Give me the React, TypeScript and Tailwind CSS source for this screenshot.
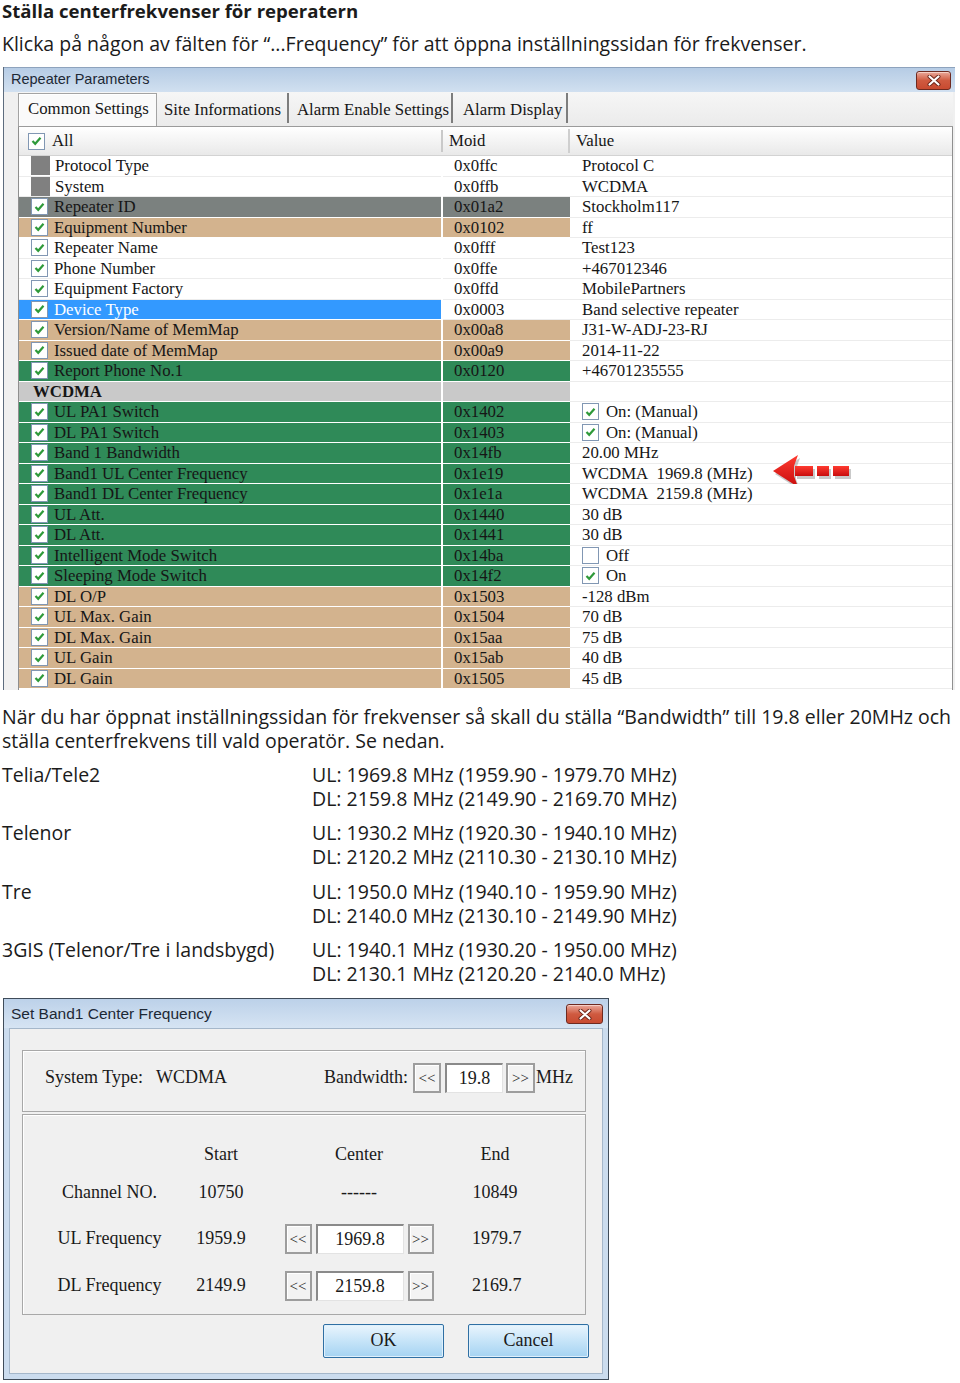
import React from 'react';

type Tone = 'plain' | 'grey' | 'tan' | 'green' | 'sel' | 'group';
type Mark = 'check' | 'locked' | 'none';

interface Param {
  name: string;
  moid: string;
  value: string;
  tone: Tone;
  mark?: Mark;
  valueBox?: 'on' | 'off';
  arrow?: boolean;
}

const params: Param[] = [
  { name: 'Protocol Type', moid: '0x0ffc', value: 'Protocol C', tone: 'plain', mark: 'locked' },
  { name: 'System', moid: '0x0ffb', value: 'WCDMA', tone: 'plain', mark: 'locked' },
  { name: 'Repeater ID', moid: '0x01a2', value: 'Stockholm117', tone: 'grey' },
  { name: 'Equipment Number', moid: '0x0102', value: 'ff', tone: 'tan' },
  { name: 'Repeater Name', moid: '0x0fff', value: 'Test123', tone: 'plain' },
  { name: 'Phone Number', moid: '0x0ffe', value: '+467012346', tone: 'plain' },
  { name: 'Equipment Factory', moid: '0x0ffd', value: 'MobilePartners', tone: 'plain' },
  { name: 'Device Type', moid: '0x0003', value: 'Band selective repeater', tone: 'sel' },
  { name: 'Version/Name of MemMap', moid: '0x00a8', value: 'J31-W-ADJ-23-RJ', tone: 'tan' },
  { name: 'Issued date of MemMap', moid: '0x00a9', value: '2014-11-22', tone: 'tan' },
  { name: 'Report Phone No.1', moid: '0x0120', value: '+46701235555', tone: 'green' },
  { name: 'WCDMA', moid: '', value: '', tone: 'group', mark: 'none' },
  { name: 'UL PA1 Switch', moid: '0x1402', value: 'On: (Manual)', tone: 'green', valueBox: 'on' },
  { name: 'DL PA1 Switch', moid: '0x1403', value: 'On: (Manual)', tone: 'green', valueBox: 'on' },
  { name: 'Band 1 Bandwidth', moid: '0x14fb', value: '20.00 MHz', tone: 'green' },
  { name: 'Band1 UL Center Frequency', moid: '0x1e19', value: 'WCDMA\u00a0 1969.8 (MHz)', tone: 'green', arrow: true },
  { name: 'Band1 DL Center Frequency', moid: '0x1e1a', value: 'WCDMA\u00a0 2159.8 (MHz)', tone: 'green' },
  { name: 'UL Att.', moid: '0x1440', value: '30 dB', tone: 'green' },
  { name: 'DL Att.', moid: '0x1441', value: '30 dB', tone: 'green' },
  { name: 'Intelligent Mode Switch', moid: '0x14ba', value: 'Off', tone: 'green', valueBox: 'off' },
  { name: 'Sleeping Mode Switch', moid: '0x14f2', value: 'On', tone: 'green', valueBox: 'on' },
  { name: 'DL O/P', moid: '0x1503', value: '-128 dBm', tone: 'tan' },
  { name: 'UL Max. Gain', moid: '0x1504', value: '70 dB', tone: 'tan' },
  { name: 'DL Max. Gain', moid: '0x15aa', value: '75 dB', tone: 'tan' },
  { name: 'UL Gain', moid: '0x15ab', value: '40 dB', tone: 'tan' },
  { name: 'DL Gain', moid: '0x1505', value: '45 dB', tone: 'tan' },
];

// full class strings per row colour
const toneCls: Record<Tone, { name: string; moid: string }> = {
  plain: { name: 'bg-white border-[#ececec]', moid: 'bg-white border-[#ececec]' },
  grey: { name: 'bg-[#7b817f] border-white', moid: 'bg-[#7b817f] border-white' },
  tan: { name: 'bg-[#d3b38e] border-white', moid: 'bg-[#d3b38e] border-white' },
  green: { name: 'bg-[#2f8a58] border-white', moid: 'bg-[#2f8a58] border-white' },
  sel: { name: 'bg-[#3399ff] border-white text-white', moid: 'bg-white border-[#ececec]' },
  group: { name: 'bg-[#c9c9c9] border-white font-bold', moid: 'bg-[#c9c9c9] border-white' },
};

const operators = [
  { name: 'Telia/Tele2', ul: 'UL: 1969.8 MHz (1959.90 - 1979.70 MHz)', dl: 'DL: 2159.8 MHz (2149.90 - 2169.70 MHz)' },
  { name: 'Telenor', ul: 'UL: 1930.2 MHz (1920.30 - 1940.10 MHz)', dl: 'DL: 2120.2 MHz (2110.30 - 2130.10 MHz)' },
  { name: 'Tre', ul: 'UL: 1950.0 MHz (1940.10 - 1959.90 MHz)', dl: 'DL: 2140.0 MHz (2130.10 - 2149.90 MHz)' },
  { name: '3GIS (Telenor/Tre i landsbygd)', ul: 'UL: 1940.1 MHz (1930.20 - 1950.00 MHz)', dl: 'DL: 2130.1 MHz (2120.20 - 2140.0 MHz)' },
];

function CheckBox({ checked = true }: { checked?: boolean }) {
  return (
    <span className="w-[17px] h-[17px] shrink-0 flex items-center justify-center bg-white border border-[#8197b3]">
      {checked && (
        <svg width="11" height="10" viewBox="0 0 11 10">
          <path d="M1.5 5 L4.2 7.8 L9.5 1.8" fill="none" stroke="#2f9a3a" strokeWidth="2.2" />
        </svg>
      )}
    </span>
  );
}

function CloseButton({ className }: { className: string }) {
  return (
    <div
      className={`flex items-center justify-center rounded-[3px] border border-[#6e2a20] bg-gradient-to-b from-[#e9a89a] via-[#cf5a40] to-[#c84a30] shadow-[inset_0_1px_0_#f6cfc5] ${className}`}
    >
      <svg width="14" height="11" viewBox="0 0 14 11">
        <path d="M2.5 1.5 L11.5 9.5 M11.5 1.5 L2.5 9.5" stroke="#6b2418" strokeWidth="4" strokeLinecap="round" />
        <path d="M2.5 1.5 L11.5 9.5 M11.5 1.5 L2.5 9.5" stroke="#ffffff" strokeWidth="2.2" strokeLinecap="round" />
      </svg>
    </div>
  );
}

function RedArrow() {
  return (
    <svg width="84" height="40" viewBox="0 0 84 40" className="absolute left-[202px] top-[-11px]">
      <defs>
        <linearGradient id="redg" x1="0" y1="0" x2="0" y2="1">
          <stop offset="0" stopColor="#ff3b30" />
          <stop offset="1" stopColor="#c80d0d" />
        </linearGradient>
      </defs>
      <g fill="#8a8a8a" opacity="0.45" transform="translate(2 3)">
        <path d="M1 18 L26 2 L22 13 L22 23 L26 34 Z" />
        <rect x="23" y="13" width="18" height="10" />
        <rect x="45" y="13" width="12" height="10" />
        <rect x="61" y="13" width="16" height="10" />
      </g>
      <g fill="url(#redg)">
        <path d="M1 18 L26 2 L22 13 L22 23 L26 34 Z" />
        <rect x="23" y="13" width="18" height="10" />
        <rect x="45" y="13" width="12" height="10" />
        <rect x="61" y="13" width="16" height="10" />
      </g>
    </svg>
  );
}

function ParamRow({ p }: { p: Param }) {
  const t = toneCls[p.tone];
  const mark = p.mark ?? 'check';
  return (
    <div className="flex h-[20.5px] text-[16.8px] leading-[19px]">
      <div className={`w-[422px] flex items-center border-b ${t.name} ${mark === 'none' ? 'pl-[14px]' : 'pl-[12px]'}`}>
        {mark === 'check' && (
          <>
            <CheckBox />
            <span className="w-[6px]" />
          </>
        )}
        {mark === 'locked' && (
          <>
            <span className="w-[19px] h-[19px] bg-[#808080] shrink-0" />
            <span className="w-[5px]" />
          </>
        )}
        <span className="whitespace-nowrap">{p.name}</span>
      </div>
      <div className="w-[2px] bg-white" />
      <div className={`w-[127px] flex items-center pl-[11px] border-b ${t.moid}`}>{p.moid}</div>
      <div className="relative flex-1 flex items-center pl-[12px] bg-white border-b border-[#ececec]">
        {p.valueBox && (
          <>
            <CheckBox checked={p.valueBox === 'on'} />
            <span className="w-[7px]" />
          </>
        )}
        <span className="whitespace-nowrap">{p.value}</span>
        {p.arrow && <RedArrow />}
      </div>
    </div>
  );
}

function RepeaterWindow() {
  return (
    <div className="mt-[11px] ml-[3px] w-[952px] border-l border-[#5d6c7e] bg-[#f0f0f0] text-[#161616] font-['Liberation_Serif','Times_New_Roman',serif]">
      <div className="h-[25px] flex items-center justify-between pl-[7px] pr-[4px] bg-gradient-to-b from-[#b6cce5] to-[#d1e0f0] border-t border-[#8ea3bd]">
        <span className="font-['Liberation_Sans',Arial,sans-serif] text-[14.5px] text-[#1d2835]">Repeater Parameters</span>
        <CloseButton className="w-[35px] h-[19px]" />
      </div>
      <div className="pl-[14px] pr-[2px]">
        {/* tab strip */}
        <div className="h-[35px] flex items-end border-b border-[#9b9b9b] bg-gradient-to-b from-[#f6f6f6] to-[#ebebeb] text-[16.8px]">
          <div className="w-[139px] h-[33px] pl-[9px] pt-[5px] leading-[20px] bg-[#fafafa] border border-b-0 border-[#a3a3a3] shadow-[inset_1px_1px_0_#ffffff]">
            Common Settings
          </div>
          <div className="w-[132px] h-[30px] pl-[7px] pt-[7px] leading-[20px] border-r-2 border-[#7d7d7d] mb-[3px]">
            Site Informations
          </div>
          <div className="w-[164px] h-[30px] pl-[8px] pt-[7px] leading-[20px] border-r-2 border-[#7d7d7d] mb-[3px]">
            Alarm Enable Settings
          </div>
          <div className="w-[115px] h-[30px] pl-[10px] pt-[7px] leading-[20px] border-r-2 border-[#7d7d7d] mb-[3px]">
            Alarm Display
          </div>
        </div>
        {/* grid */}
        <div className="border-l border-r border-[#8f8f8f] bg-white">
          <div className="flex h-[29px] text-[16.8px] bg-gradient-to-b from-[#ffffff] to-[#e9e9e9] border-b border-[#d3d3d3]">
            <div className="w-[422px] flex items-center pl-[9px]">
              <CheckBox />
              <span className="ml-[7px]">All</span>
            </div>
            <div className="w-[2px] my-[3px] bg-[#c9c9c9]" />
            <div className="w-[127px] flex items-center pl-[6px] border-r-2 border-[#cfcfcf] my-[2px]">Moid</div>
            <div className="flex-1 flex items-center pl-[6px]">Value</div>
          </div>
          {params.map((p) => (
            <ParamRow key={p.name} p={p} />
          ))}
          <div className="h-[1px]" />
        </div>
      </div>
    </div>
  );
}

function SpinButton({ label, className }: { label: string; className: string }) {
  return (
    <div
      className={`h-[30px] flex items-center justify-center border-2 border-[#9d9d9d] bg-[#f3f3f3] shadow-[inset_1px_1px_0_#ffffff] text-[15px] ${className}`}
    >
      {label}
    </div>
  );
}

function Field({ value, className }: { value: string; className: string }) {
  return (
    <div
      className={`h-[30px] flex items-center justify-center bg-white border-t-2 border-l-2 border-[#8a8a8a] border-b border-r border-b-[#e3e3e3] border-r-[#e3e3e3] ${className}`}
    >
      {value}
    </div>
  );
}

function FreqControl({ value }: { value: string }) {
  return (
    <div className="flex items-center gap-[4px]">
      <SpinButton label="<<" className="w-[27px]" />
      <Field value={value} className="w-[88px]" />
      <SpinButton label=">>" className="w-[26px]" />
    </div>
  );
}

function DialogButton({ label }: { label: string }) {
  return (
    <div className="w-[121px] h-[34px] flex items-center justify-center rounded-[2px] border border-[#2f6fa3] bg-gradient-to-b from-[#eaf5fd] via-[#c6e4f8] to-[#a5d3f2] shadow-[inset_0_0_0_1px_#dff0fc] text-[18px]">
      {label}
    </div>
  );
}

function BandDialog() {
  return (
    <div className="mt-[12px] ml-[3px] w-[606px] border border-[#3f4c5a] bg-[#cbdcee] text-[#1a1a1a] font-['Liberation_Serif','Times_New_Roman',serif]">
      <div className="h-[29px] flex items-center justify-between pl-[7px] pr-[5px] bg-gradient-to-b from-[#bcd1e9] to-[#d6e4f3]">
        <span className="font-['Liberation_Sans',Arial,sans-serif] text-[15.5px] text-[#1d2835]">Set Band1 Center Frequency</span>
        <CloseButton className="w-[37px] h-[20px] mt-[2px]" />
      </div>
      <div className="mx-[5px] mb-[5px] bg-[#f0f0f0] border border-[#a5b7ca] pt-[21px] pb-[15px] pl-[12px] pr-[16px]">
        <div className="h-[62px] border border-[#a8a8a8] shadow-[inset_1px_1px_0_#ffffff] flex items-center justify-between pl-[22px] pr-[12px] pb-[6px] text-[18px]">
          <span>System Type:&nbsp;&nbsp; WCDMA</span>
          <div className="flex items-center">
            <span className="mr-[5px]">Bandwidth:</span>
            <SpinButton label="<<" className="w-[28px]" />
            <Field value="19.8" className="w-[58px] ml-[4px]" />
            <SpinButton label=">>" className="w-[29px] ml-[3px]" />
            <span className="ml-[1px]">MHz</span>
          </div>
        </div>
        <div className="mt-[2px] h-[201px] border border-[#a8a8a8] shadow-[inset_1px_1px_0_#ffffff] pt-[25px] text-[18px]">
          <div className="grid grid-cols-[173px_50px_226px_46px] items-center">
            <div className="h-[30px]" />
            <div className="text-center">Start</div>
            <div className="text-center">Center</div>
            <div className="text-center">End</div>

            <div className="h-[30px] mt-[8px] flex items-center justify-center">Channel NO.</div>
            <div className="mt-[8px] text-center">10750</div>
            <div className="mt-[8px] text-center">------</div>
            <div className="mt-[8px] text-center">10849</div>

            <div className="h-[30px] mt-[16px] flex items-center justify-center">UL Frequency</div>
            <div className="mt-[16px] text-center">1959.9</div>
            <div className="mt-[16px] flex justify-center">
              <FreqControl value="1969.8" />
            </div>
            <div className="mt-[16px] text-center">1979.7</div>

            <div className="h-[30px] mt-[17px] flex items-center justify-center">DL Frequency</div>
            <div className="mt-[17px] text-center">2149.9</div>
            <div className="mt-[17px] flex justify-center">
              <FreqControl value="2159.8" />
            </div>
            <div className="mt-[17px] text-center">2169.7</div>
          </div>
        </div>
        <div className="mt-[9px] flex justify-end gap-[24px] mr-[-3px]">
          <DialogButton label="OK" />
          <DialogButton label="Cancel" />
        </div>
      </div>
    </div>
  );
}

export default function App() {
  return (
    <div className="w-[960px] min-h-[1383px] bg-white text-[#1b1b1b] font-['Open_Sans','Noto_Sans',sans-serif]">
      <h1 className="pl-[2px] h-[21px] leading-[21px] text-[18.6px] font-bold whitespace-nowrap">Ställa centerfrekvenser för reperatern</h1>
      <p className="pl-[2px] mt-[11px] h-[24px] leading-[24px] text-[19.5px] whitespace-nowrap">
        Klicka på någon av fälten för “...Frequency” för att öppna inställningssidan för frekvenser.
      </p>

      <RepeaterWindow />

      <p className="mt-[15px] pl-[2px] text-[19.5px] leading-[24px] whitespace-nowrap">
        När du har öppnat inställningssidan för frekvenser så skall du ställa “Bandwidth” till 19.8 eller 20MHz och
        <br />
        ställa centerfrekvens till vald operatör. Se nedan.
      </p>

      <div className="mt-[10px] flex flex-col gap-[10.33px] text-[19.5px] leading-[24px]">
        {operators.map((o) => (
          <div key={o.name} className="flex">
            <div className="w-[312px] pl-[2px]">{o.name}</div>
            <div>
              <div>{o.ul}</div>
              <div>{o.dl}</div>
            </div>
          </div>
        ))}
      </div>

      <BandDialog />
    </div>
  );
}
